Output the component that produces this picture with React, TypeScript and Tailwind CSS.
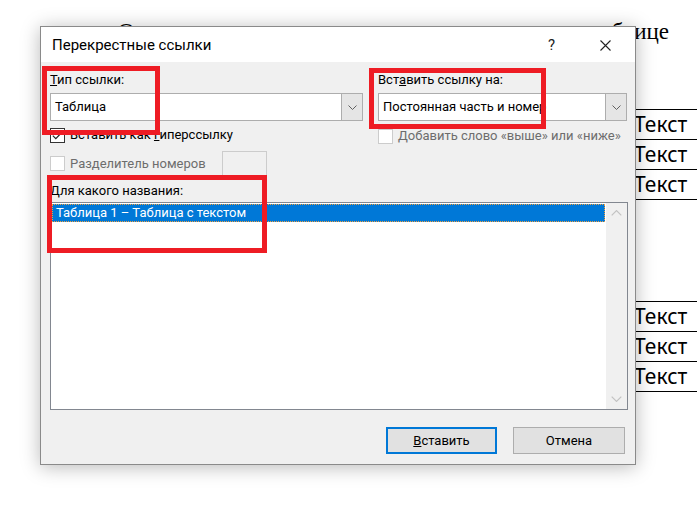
import React from "react";

const ui = "font-['Roboto','Noto_Sans',sans-serif]";

function Chevron({ up = false, className = "" }: { up?: boolean; className?: string }) {
  return (
    <svg width="9" height="5" viewBox="0 0 9 5" className={className}>
      <path
        d={up ? "M0.5 4.5 L4.5 0.5 L8.5 4.5" : "M0.5 0.5 L4.5 4.5 L8.5 0.5"}
        fill="none"
        stroke="currentColor"
        strokeWidth="1"
      />
    </svg>
  );
}

function Combo({ value, width }: { value: string; width: string }) {
  return (
    <div className={`flex h-[28px] ${width} border border-[#adadad] bg-white`}>
      <div className="flex flex-1 items-center overflow-hidden whitespace-nowrap pl-[4px] text-[13px] text-black">
        {value}
      </div>
      <div className="flex w-[21px] items-center justify-center border-l border-[#adadad] bg-[#e5e5e5] text-[#606060]">
        <Chevron />
      </div>
    </div>
  );
}

function Check({ checked = false, disabled = false, label }: { checked?: boolean; disabled?: boolean; label: React.ReactNode }) {
  return (
    <div className="flex h-[16px] items-center gap-[5px]">
      <div
        className={`flex h-[15px] w-[15px] items-center justify-center border bg-white ${
          disabled ? "border-[#cccccc]" : "border-[#333333]"
        }`}
      >
        {checked && (
          <svg width="11" height="9" viewBox="0 0 11 9">
            <path d="M0.8 4.6 L3.8 7.6 L10.2 1" fill="none" stroke="#222" strokeWidth="1.2" />
          </svg>
        )}
      </div>
      <span className={`text-[13px] leading-[16px] ${disabled ? "text-[#6d6d6d]" : "text-black"}`}>{label}</span>
    </div>
  );
}

export default function App() {
  const rows = [0, 1, 2];
  return (
    <div className="relative h-[507px] w-[697px] overflow-hidden bg-white">
      {/* document behind the dialog */}
      <p className="ml-[118px] mt-[18px] w-[551px] whitespace-nowrap font-['Liberation_Serif',serif] text-[23px] leading-[28px] text-black [text-align-last:justify]">
        Отношение данного текста представлено в таблице
      </p>
      <div className="mt-[63px] flex flex-col items-end">
        {rows.map((r) => (
          <div key={r} className="flex h-[30px] w-[600px] items-center border-t border-black pl-[537px] font-['Noto_Sans',sans-serif] text-[21px] text-black">
            Текст
          </div>
        ))}
        <div className="w-[600px] border-t border-black" />
      </div>
      <div className="mt-[101px] flex flex-col items-end">
        {rows.map((r) => (
          <div key={r} className="flex h-[30px] w-[600px] items-center border-t border-black pl-[537px] font-['Noto_Sans',sans-serif] text-[21px] text-black">
            Текст
          </div>
        ))}
        <div className="w-[600px] border-t border-black" />
      </div>

      {/* dialog */}
      <div
        className={`absolute left-[40px] top-[26px] flex h-[439px] w-[596px] flex-col border border-[#8a8a8a] bg-[#f0f0f0] shadow-[0_2px_18px_rgba(0,0,0,0.28)] ${ui}`}
      >
        <div className="flex h-[37px] items-center bg-white pl-[11px] pt-[2px] text-[15px] text-black">
          <span className="flex-1">Перекрестные ссылки</span>
          <span className="mr-[45px] text-[15px] text-[#222]">?</span>
          <svg width="11" height="11" viewBox="0 0 11 11" className="mr-[24px]">
            <path d="M0.5 0.5 L10.5 10.5 M10.5 0.5 L0.5 10.5" stroke="#222" strokeWidth="1.1" />
          </svg>
        </div>

        <div className="flex flex-1 flex-col px-[9px] pb-[10px] pt-[10px] text-[13px]">
          <div className="flex gap-[15px]">
            <div className="flex w-[313px] flex-col">
              <span className="h-[16px] leading-[16px]">
                <u>Т</u>ип ссылки:
              </span>
              <div className="mt-[5px]">
                <Combo value="Таблица" width="w-[313px]" />
              </div>
              <div className="mt-[6px]">
                <Check checked label={<>Вставить как <u>г</u>иперссылку</>} />
              </div>
            </div>
            <div className="flex w-[249px] flex-col">
              <span className="h-[16px] leading-[16px]">
                Вст<u>а</u>вить ссылку на:
              </span>
              <div className="mt-[5px]">
                <Combo value="Постоянная часть и номер" width="w-[249px]" />
              </div>
              <div className="mt-[7px]">
                <Check disabled label="Добавить слово «выше» или «ниже»" />
              </div>
            </div>
          </div>

          <div className="mt-[7px] flex h-[25px] items-center">
            <div className="w-[172px]">
              <Check disabled label="Разделитель номеров" />
            </div>
            <div className="h-[25px] w-[45px] border border-[#cccccc] bg-[#f0f0f0]" />
          </div>

          <span className="mt-[7px] h-[16px] leading-[16px]">
            <u>Д</u>ля какого названия:
          </span>

          <div className="mt-[3px] flex h-[208px] w-[578px] border border-[#828790] bg-white">
            <div className="flex-1 p-[1px]">
              <div className="flex h-[18px] items-center border border-dotted border-[#f0a040] bg-[#0078d7] pl-[3px] text-[13px] text-white">
                Таблица 1 – Таблица с текстом
              </div>
            </div>
            <div className="flex w-[21px] flex-col items-center justify-between bg-[#f0f0f0] py-[7px] text-[#c2c2c2]">
              <Chevron up className="h-[6px] w-[11px]" />
              <Chevron className="h-[6px] w-[11px]" />
            </div>
          </div>

          <div className="mt-[17px] flex justify-end gap-[16px] pr-[1px]">
            <button className="h-[27px] w-[111px] border-2 border-[#0078d7] bg-[#e1e1e1] text-[13px] text-black">
              <u>В</u>ставить
            </button>
            <button className="h-[27px] w-[112px] border border-[#adadad] bg-[#e1e1e1] text-[13px] text-black">
              Отмена
            </button>
          </div>
        </div>

        {/* red annotation frames */}
        <div className="pointer-events-none absolute left-[1px] top-[39px] h-[69px] w-[118px] border-[5px] border-[#ee1c24]" />
        <div className="pointer-events-none absolute left-[328px] top-[41px] h-[61px] w-[177px] border-[5px] border-[#ee1c24]" />
        <div className="pointer-events-none absolute left-[6px] top-[148px] h-[78px] w-[220px] border-[5px] border-[#ee1c24]" />
      </div>
    </div>
  );
}
